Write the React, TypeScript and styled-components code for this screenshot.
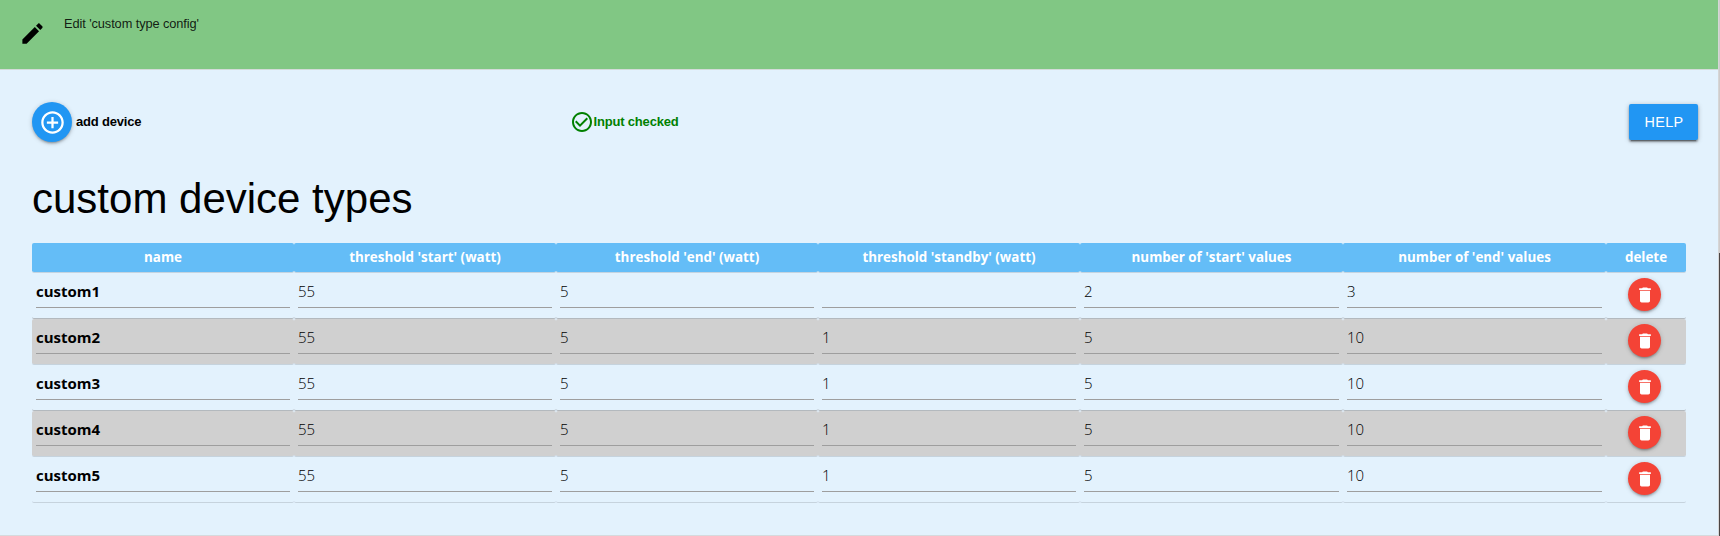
import React from "react";
import styled, { createGlobalStyle } from "styled-components";

const GlobalStyle = createGlobalStyle`
  * { box-sizing: border-box; }
  body { margin: 0; background: #e3f2fd; color: #000; font-family: "Liberation Sans", Arial, sans-serif; overflow: hidden; }
`;

const Window = styled.div`
  display: flex;
  width: 1720px;
  height: 536px;
`;
const Page = styled.main`
  width: 1719px;
  height: 536px;
  border-right: 1px solid #d6d6d6;
  border-bottom: 1px solid #d6dadd;
  background: #e3f2fd;
`;
const ScrollEdge = styled.div`
  width: 1px;
  background: linear-gradient(#cfcccc 253px, #4b4544 253px);
`;
const TitleBar = styled.header`
  display: flex;
  height: 70px;
  padding: 20px 0 0 19px;
  gap: 18px;
  background: #81c784;
  border-bottom: 1px solid #d3dbd9;
`;
const TitleText = styled.span`
  margin-top: -5px;
  height: 18px;
  font-size: 12.8px;
  letter-spacing: -0.09px;
  line-height: 18px;
  white-space: nowrap;
  color: rgba(0, 0, 0, 0.87);
`;
const Toolbar = styled.div`
  display: grid;
  grid-template-columns: 537.5px 1fr auto;
  align-items: center;
  height: 40px;
  margin: 32px 20px 0 32px;
  font-size: 13px;
  font-weight: bold;
`;
const AddGroup = styled.div`
  display: flex;
  align-items: center;
  gap: 4px;
`;
const RoundButton = styled.button<{ $size: number; $color: string }>`
  display: flex;
  align-items: center;
  justify-content: center;
  width: ${(p) => p.$size}px;
  height: ${(p) => p.$size}px;
  padding: 0;
  border: 0;
  border-radius: 50%;
  background: ${(p) => p.$color};
  color: #fff;
  box-shadow: 0 2px 2px rgba(0, 0, 0, 0.14), 0 3px 1px -2px rgba(0, 0, 0, 0.12), 0 1px 5px rgba(0, 0, 0, 0.2);
`;
const Label = styled.span<{ $spacing?: number }>`
  letter-spacing: ${(p) => p.$spacing ?? 0}px;
  line-height: 18px;
  white-space: nowrap;
`;
const Status = styled.div`
  display: flex;
  align-items: center;
  color: green;
`;
const HelpButton = styled.button`
  width: 69px;
  height: 36px;
  margin-top: -1px;
  padding: 0 0 0 1px;
  border: 0;
  border-radius: 2px;
  background: #2196f3;
  color: #fff;
  font: 14.4px "Liberation Sans", Arial, sans-serif;
  letter-spacing: 0.3px;
  box-shadow: 0 2px 2px rgba(0, 0, 0, 0.3), 0 3px 1px -2px rgba(0, 0, 0, 0.3), 0 1px 5px rgba(0, 0, 0, 0.25);
`;
const Heading = styled.h1`
  height: 54px;
  margin: 30px 0 17px 32px;
  font-size: 42px;
  font-weight: normal;
  line-height: 54px;
`;
const Table = styled.table`
  width: 1654px;
  margin-left: 32px;
  table-layout: fixed;
  border-collapse: separate;
  border-spacing: 0;
  font-family: "Open Sans", "Noto Sans", sans-serif;
`;
const HeadCell = styled.th`
  height: 30px;
  padding: 0 0 2px;
  border-bottom: 1px solid #c5d4e0;
  border-radius: 2px;
  background: #64bdf7;
  background-clip: padding-box;
  color: #fff;
  font-size: 13.4px;
  line-height: 20px;
  white-space: nowrap;
`;
const Row = styled.tr<{ $striped: boolean }>`
  td {
    background: ${(p) => (p.$striped ? "#d0d0d0" : "transparent")};
    background-clip: padding-box;
    border-bottom: 1px solid #c6d3dd;
  }
  &:nth-child(odd):not(:last-child) td { border-bottom-color: #b3b9be; }
`;
const Cell = styled.td`
  height: 46px;
  padding: 0 4px;
  border-radius: 2px;
  vertical-align: top;
`;
const Field = styled.div<{ $bold?: boolean }>`
  height: 35px;
  padding-top: 8px;
  border-bottom: 1px solid #9e9e9e;
  font-size: 15px;
  font-weight: ${(p) => (p.$bold ? 700 : 350)};
  line-height: 20px;
`;
const DeleteHolder = styled.div`
  display: flex;
  padding: 5px 0 0 18px;
`;

const ICONS = {
  edit: "M3 17.25V21h3.75L17.81 9.94l-3.75-3.75L3 17.25zM20.71 7.04c.39-.39.39-1.02 0-1.41l-2.34-2.34c-.39-.39-1.02-.39-1.41 0l-1.83 1.83 3.75 3.75 1.83-1.83z",
  add: "M13 7h-2v4H7v2h4v4h2v-4h4v-2h-4V7zm-1-5C6.48 2 2 6.48 2 12s4.48 10 10 10 10-4.48 10-10S17.52 2 12 2zm0 18c-4.41 0-8-3.59-8-8s3.59-8 8-8 8 3.59 8 8-3.59 8-8 8z",
  check: "M16.59 7.58L10 14.17l-3.59-3.58L5 12l5 5 8-8zM12 2C6.48 2 2 6.48 2 12s4.48 10 10 10 10-4.48 10-10S17.52 2 12 2zm0 18c-4.42 0-8-3.58-8-8s3.58-8 8-8 8 3.58 8 8-3.58 8-8 8z",
  trash: "M6 19c0 1.1.9 2 2 2h8c1.1 0 2-.9 2-2V7H6v12zM19 4h-3.5l-1-1h-5l-1 1H5v2h14V4z",
};

const Icon = ({ name, size }: { name: keyof typeof ICONS; size: number }) => (
  <svg width={size} height={size} viewBox="0 0 24 24" fill="currentColor">
    <path d={ICONS[name]} />
  </svg>
);

const COLUMNS: { title: string; width: number }[] = [
  { title: "name", width: 262 },
  { title: "threshold 'start' (watt)", width: 262 },
  { title: "threshold 'end' (watt)", width: 262 },
  { title: "threshold 'standby' (watt)", width: 262 },
  { title: "number of 'start' values", width: 263 },
  { title: "number of 'end' values", width: 263 },
  { title: "delete", width: 80 },
];

const DEVICES = [
  ["custom1", "55", "5", "", "2", "3"],
  ["custom2", "55", "5", "1", "5", "10"],
  ["custom3", "55", "5", "1", "5", "10"],
  ["custom4", "55", "5", "1", "5", "10"],
  ["custom5", "55", "5", "1", "5", "10"],
];

export default function App() {
  return (
    <Window>
      <GlobalStyle />
      <Page>
        <TitleBar>
          <Icon name="edit" size={27} />
          <TitleText>Edit 'custom type config'</TitleText>
        </TitleBar>
        <Toolbar>
          <AddGroup>
            <RoundButton $size={40} $color="#2196f3" aria-label="add device">
              <Icon name="add" size={27} />
            </RoundButton>
            <Label $spacing={-0.2}>add device</Label>
          </AddGroup>
          <Status>
            <Icon name="check" size={24} />
            <Label $spacing={-0.18}>Input checked</Label>
          </Status>
          <HelpButton>HELP</HelpButton>
        </Toolbar>
        <Heading>custom device types</Heading>
        <Table>
          <colgroup>
            {COLUMNS.map((c) => (
              <col key={c.title} width={c.width} />
            ))}
          </colgroup>
          <thead>
            <tr>
              {COLUMNS.map((c) => (
                <HeadCell key={c.title}>
                  <Label>{c.title}</Label>
                </HeadCell>
              ))}
            </tr>
          </thead>
          <tbody>
            {DEVICES.map((values, i) => (
              <Row key={values[0]} $striped={i % 2 === 1}>
                {values.map((v, j) => (
                  <Cell key={j}>
                    <Field $bold={j === 0}>{v}</Field>
                  </Cell>
                ))}
                <Cell>
                  <DeleteHolder>
                    <RoundButton $size={33} $color="#f44336" aria-label="delete">
                      <Icon name="trash" size={20} />
                    </RoundButton>
                  </DeleteHolder>
                </Cell>
              </Row>
            ))}
          </tbody>
        </Table>
      </Page>
      <ScrollEdge />
    </Window>
  );
}
